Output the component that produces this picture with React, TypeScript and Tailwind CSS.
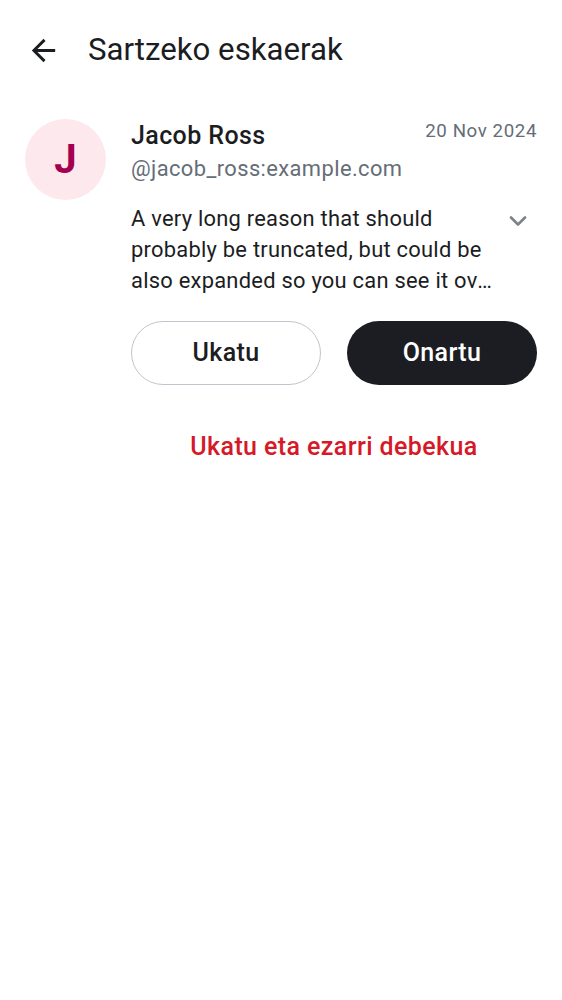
export default function App() {
  return (
    <div className="min-h-screen bg-white text-[#1b1d22]" style={{ fontFamily: "Roboto, 'Noto Sans', sans-serif" }}>
      {/* top bar */}
      <div className="flex h-[100px] items-center">
        <button className="ml-[26px] flex h-[35px] w-[35px] items-center justify-center">
          <svg viewBox="0 0 24 24" className="h-[35px] w-[35px]" fill="#1b1d22">
            <path d="M20 11H7.83l5.59-5.59L12 4l-8 8 8 8 1.41-1.41L7.83 13H20v-2z" />
          </svg>
        </button>
        <h1 className="ml-[27px] text-[31.2px] leading-none font-normal">Sartzeko eskaerak</h1>
      </div>

      {/* request */}
      <div className="flex gap-[25px] px-[25px] pt-[19px]">
        <div className="flex h-[81px] w-[81px] shrink-0 items-center justify-center rounded-full bg-[#fde8ee]">
          <span className="text-[40px] leading-none font-bold text-[#a5004f]">J</span>
        </div>
        <div className="min-w-0 flex-1">
          <div className="flex items-start justify-between">
            <div className="min-w-0">
              <p className="text-[25px] leading-[34px] font-medium tracking-[0.4px]">Jacob Ross</p>
              <p className="text-[21.9px] leading-[31px] tracking-[0.4px] text-[#656d77]">@jacob_ross:example.com</p>
            </div>
            <span className="text-[18.7px] leading-[25px] tracking-[0.6px] text-[#656d77]">20 Nov 2024</span>
          </div>
          <div className="mt-[19px] flex items-start gap-[8px]">
            <p className="line-clamp-3 flex-1 text-[21.9px] leading-[31.2px] tracking-[0.25px]">
              A very long reason that should probably be truncated, but could be also expanded so you can see it over multiple lines.
            </p>
            <div className="mt-[2px] mr-[7px] flex h-[31px] w-[24px] shrink-0 items-center justify-center">
              <svg viewBox="0 0 18 10" className="h-[10px] w-[18px]" fill="none" stroke="#7c828c" strokeWidth="2.6" strokeLinecap="round" strokeLinejoin="round">
                <path d="M2 1.5l7 7 7-7" />
              </svg>
            </div>
          </div>
          <div className="mt-[24px] grid grid-cols-2 gap-[26px]">
            <button className="h-[64px] rounded-full border border-[#c0c5cd] text-[25px] font-medium tracking-[0.4px]">Ukatu</button>
            <button className="h-[64px] rounded-full bg-[#1b1d22] text-[25px] font-medium tracking-[0.4px] text-white">Onartu</button>
          </div>
          <div className="mt-[45px] text-center text-[25px] leading-[34px] font-medium tracking-[0.4px] text-[#d51928]">Ukatu eta ezarri debekua</div>
        </div>
      </div>
    </div>
  );
}
